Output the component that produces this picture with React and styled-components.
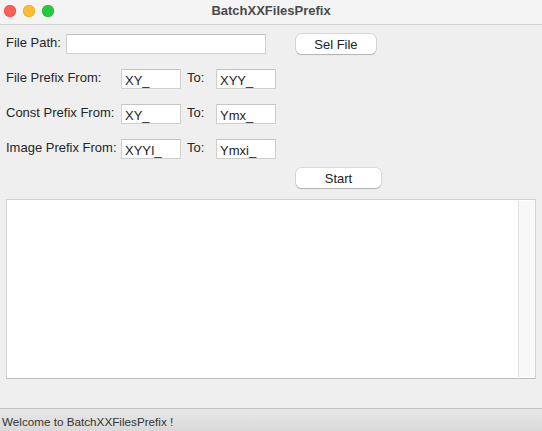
import React from 'react'
import styled, { createGlobalStyle } from 'styled-components'

const Global = createGlobalStyle`
  html, body { margin: 0; padding: 0; }
  body { font-family: "Liberation Sans", Arial, sans-serif; background: #efefef; }
`

const prefixRows = [
  { label: 'File Prefix From:', from: 'XY_', to: 'XYY_' },
  { label: 'Const Prefix From:', from: 'XY_', to: 'Ymx_' },
  { label: 'Image Prefix From:', from: 'XYYI_', to: 'Ymxi_' },
]

const App = () => {
  return (
    <Window>
      <Global />
      <TitleBar>
        <Lights>
          <Light color="#fe5f57" edge="#e0443e" />
          <Light color="#febc2e" edge="#dea123" />
          <Light color="#28c840" edge="#1aab29" />
        </Lights>
        <Title>BatchXXFilesPrefix</Title>
      </TitleBar>
      <Content>
        <Row>
          <Label>File Path:</Label>
          <TextBox width={200} />
          <Button width={80} left={30}>Sel File</Button>
        </Row>
        {prefixRows.map((r) => (
          <Row key={r.label}>
            <Label width={115}>{r.label}</Label>
            <TextBox width={60}>{r.from}</TextBox>
            <ToLabel>To:</ToLabel>
            <TextBox width={60}>{r.to}</TextBox>
          </Row>
        ))}
        <ButtonRow>
          <Button width={85} left={290}>Start</Button>
        </ButtonRow>
        <LogBox>
          <ScrollTrack />
        </LogBox>
      </Content>
      <StatusBar>Welcome to BatchXXFilesPrefix !</StatusBar>
    </Window>
  )
}

export default App

const Window = styled.div`
  width: 542px;
  height: 431px;
  display: flex;
  flex-direction: column;
  background: #efefef;
  overflow: hidden;
`

const TitleBar = styled.div`
  position: relative;
  height: 24px;
  flex: none;
  background: #f4f4f4;
  border-bottom: 1px solid #d2d2d2;
  display: flex;
  align-items: center;
  justify-content: center;
`

const Lights = styled.div`
  position: absolute;
  left: 4px;
  top: 5px;
  display: flex;
  gap: 7px;
`

const Light = styled.span`
  width: 12px;
  height: 12px;
  border-radius: 50%;
  background: ${(p) => p.color};
  box-shadow: inset 0 0 0 0.5px ${(p) => p.edge};
`

const Title = styled.div`
  font-size: 13px;
  font-weight: bold;
  color: #4b4b4b;
  margin-top: -3px;
`

const Content = styled.div`
  flex: 1;
  display: flex;
  flex-direction: column;
  padding: 9px 6px 0 6px;
  gap: 15px;
`

const Row = styled.div`
  display: flex;
  align-items: center;
  height: 20px;
`

const ButtonRow = styled(Row)`
  margin-top: -6px;
`

const Label = styled.span`
  font-size: 13px;
  color: #262626;
  width: ${(p) => (p.width ? `${p.width}px` : 'auto')};
  margin-right: ${(p) => (p.width ? '0' : '5px')};
  margin-top: -3px;
  white-space: nowrap;
  flex: none;
`

const ToLabel = styled.span`
  flex: none;
  font-size: 13px;
  color: #262626;
  width: 35px;
  padding-left: 6px;
  box-sizing: border-box;
  margin-top: -3px;
`

const TextBox = styled.div`
  flex: none;
  box-sizing: border-box;
  width: ${(p) => p.width}px;
  height: 20px;
  border: 1px solid #cfcfcf;
  border-top-color: #c4c4c4;
  background: #fff;
  font-size: 13px;
  line-height: 14px;
  color: #1e1e1e;
  padding: 4px 3px 0 3px;
  white-space: nowrap;
`

const Button = styled.button`
  box-sizing: border-box;
  width: ${(p) => p.width}px;
  height: 20px;
  margin-left: ${(p) => p.left}px;
  background: #fff;
  border: none;
  border-radius: 5px;
  box-shadow: 0 0 0 0.5px rgba(0, 0, 0, 0.18), 0 1px 1px rgba(0, 0, 0, 0.18);
  font-family: "Liberation Sans", Arial, sans-serif;
  font-size: 13px;
  color: #222;
  padding: 0;
`

const LogBox = styled.div`
  margin-top: -4px;
  height: 180px;
  box-sizing: border-box;
  background: #fff;
  border: 1px solid #d0d0d0;
  border-bottom-color: #bdbdbd;
  display: flex;
  justify-content: flex-end;
  padding: 1px;
`

const ScrollTrack = styled.div`
  width: 15px;
  background: #f8f8f8;
  border-left: 1px solid #e2e2e2;
`

const StatusBar = styled.div`
  height: 23px;
  flex: none;
  box-sizing: border-box;
  border-top: 1px solid #c2c2c2;
  background: linear-gradient(#e8e8e8, #d9d9d9);
  font-size: 11.7px;
  color: #333;
  padding: 6px 0 0 2px;
`
